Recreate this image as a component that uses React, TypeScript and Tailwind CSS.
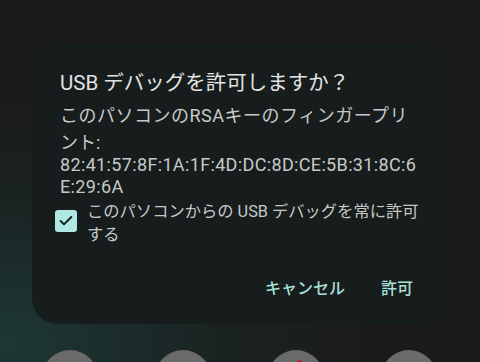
import { Check } from "lucide-react";

const font = { fontFamily: 'Roboto, "Noto Sans CJK JP", sans-serif' };

function AppIcon({ accent }: { accent?: boolean }) {
  return (
    <div className="relative h-[56px] w-[56px] flex-none rounded-full bg-[#6a6a6a]">
      {accent && <div className="absolute left-[29px] top-[10px] h-[4px] w-[5px] rounded-sm bg-[#b3262b]" />}
    </div>
  );
}

export default function App() {
  return (
    <div
      className="flex h-[362px] w-[480px] flex-col overflow-hidden bg-[radial-gradient(ellipse_90%_80%_at_0%_95%,#1d3835_0%,#1a2322_50%,#1b1b1b_85%)]"
      style={font}
    >
      <div className="mx-[32px] mt-[44px] flex h-[280px] flex-none flex-col rounded-[26px] bg-[#171c1c] pl-[28px] pr-[20px] pt-[25px]">
        <div className="whitespace-nowrap text-[20.5px] leading-[28px] text-[#e2e3e3]">USB デバッグを許可しますか？</div>
        <div className="mt-[5px] whitespace-nowrap text-[18px] text-[#c5cac9]">
          <div className="leading-[27px] tracking-[0.5px]">このパソコンのRSAキーのフィンガープリ</div>
          <div className="mt-[3px] leading-[22px]">ント:</div>
          <div className="leading-[22px] tracking-[0.35px]">82:41:57:8F:1A:1F:4D:DC:8D:CE:5B:31:8C:6</div>
          <div className="leading-[22px] tracking-[0.35px]">E:29:6A</div>
        </div>
        <div className="-ml-[5px] mt-[2px] flex items-start gap-[10px]">
          <div className="mt-[10px] flex h-[22px] w-[22px] flex-none items-center justify-center rounded-[3px] bg-[#b0e8e2]">
            <Check className="h-[16px] w-[16px] text-[#0e2220]" strokeWidth={3} />
          </div>
          <div className="whitespace-nowrap text-[16.3px] leading-[23px] text-[#c5cac9]">
            <div>このパソコンからの USB デバッグを常に許可</div>
            <div>する</div>
          </div>
        </div>
        <div className="mt-auto mb-[15px] flex h-[40px] items-center justify-end gap-[36px] pr-[15px] text-[16px] font-medium text-[#a9e0d9]">
          <button type="button">キャンセル</button>
          <button type="button">許可</button>
        </div>
      </div>
      <div className="mt-[26px] flex flex-none gap-[57px] pl-[42px]">
        <AppIcon />
        <AppIcon />
        <AppIcon accent />
        <AppIcon />
      </div>
    </div>
  );
}
